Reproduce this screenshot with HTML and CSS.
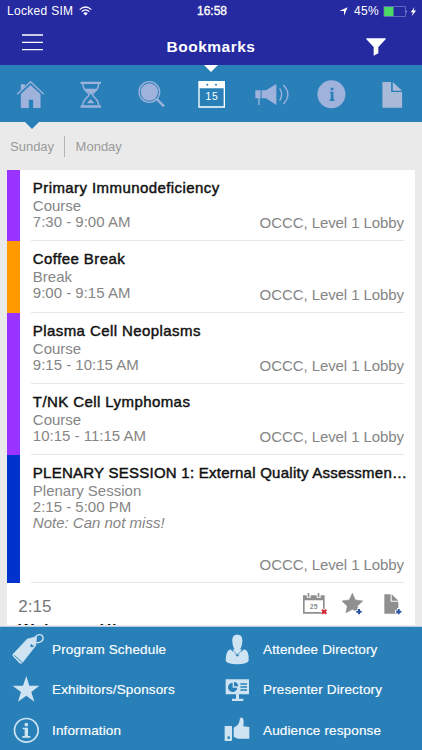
FILE: index.html
```html
<!DOCTYPE html>
<html lang="en">
<head>
    <meta charset="UTF-8">
    <meta name="viewport" content="width=device-width, initial-scale=1.0">
    <title>Bookmarks</title>
    <link rel="stylesheet" href="styles.css">
</head>
<body>
    <div class="app">
        <div class="header">
            <div class="status-bar">
                <div class="carrier">
                    <span class="carrier-name">Locked SIM</span>
                    <svg class="wifi" viewBox="0 0 39 30" fill="none" stroke="#fff" stroke-width="3.6">
                        <path d="M2 11Q19.500 -5 37 11M8 17Q19.500 6 31 17"/>
                        <path d="M12.500 21.500Q19.500 15.500 26.500 21.500L19.500 28.500Z" fill="#fff" stroke="none"/>
                    </svg>
                </div>
                <span class="clock">16:58</span>
                <div class="battery">
                    <svg class="location-arrow" viewBox="0 0 27 27"><path d="M26 1L15 26V12H1Z" fill="#fff"/></svg>
                    <span class="percent">45%</span>
                    <svg class="battery-icon" viewBox="0 0 102 34">
                        <rect x="1.500" y="2" width="66" height="30" fill="none" stroke="#8385cf" stroke-width="2"/>
                        <rect x="2" y="3" width="29" height="28" fill="#4cd964"/>
                        <path d="M71 12Q75 17 71 22Z" fill="#fff"/>
                        <path d="M96 3L84 19H91L87 32L101 14H93Z" fill="#fff"/>
                    </svg>
                </div>
            </div>
            <div class="nav-bar">
                <svg class="menu-btn" viewBox="0 0 63 51" stroke="#fff" stroke-width="4"><path d="M0 3H63M0 25H63M0 47H63"/></svg>
                <h1>Bookmarks</h1>
                <svg class="filter-btn" viewBox="0 0 60 54"><path d="M1 1H59V4L37 27V46L23 53V27L1 4Z" fill="#fff"/></svg>
            </div>
        </div>

        <div class="tab-bar">
            <div class="tab home">
                <svg viewBox="36.400 45 108 108" fill="currentColor">
                    <path d="M63 96L92 69L122 96V138H100V113H87V138H63ZM63 67H75V74L63 85Z"/>
                    <path d="M52 97L92 59L132 97" fill="none" stroke="currentColor" stroke-width="4"/>
                </svg>
            </div>
            <div class="tab">
                <svg viewBox="217.300 45 108 108" fill="currentColor">
                    <path d="M243 59H304V66H243ZM243 130H304V137H243Z"/>
                    <path d="M250 66C250 88 268 90 268 98C268 106 250 110 250 130M297 66C297 88 279 90 279 98C279 106 297 110 297 130" fill="none" stroke="currentColor" stroke-width="4.500"/>
                    <path d="M257 80H290Q286 88 279 92L274 99L268 92Q260 88 257 80ZM273 112Q280 118 284 124H263Q266 118 273 112Z"/>
                </svg>
            </div>
            <div class="tab">
                <svg viewBox="398 45 108 108" fill="currentColor">
                    <circle cx="447" cy="90" r="26"/>
                    <circle cx="447" cy="90" r="31" fill="none" stroke="currentColor" stroke-width="4"/>
                    <path d="M468 110L491 133" stroke="currentColor" stroke-width="7"/>
                </svg>
            </div>
            <div class="tab active">
                <svg viewBox="579 45 108 108">
                    <path d="M595 57H675V137H595ZM599 79V133H671V79Z" fill="#fff" fill-rule="evenodd"/>
                    <circle cx="622" cy="68" r="3" fill="#2980b9"/>
                    <circle cx="648" cy="68" r="3" fill="#2980b9"/>
                    <text class="tab-day" x="636" y="115" text-anchor="middle">15</text>
                </svg>
            </div>
            <div class="tab">
                <svg viewBox="127 45 108 108" fill="currentColor">
                    <path d="M134 85H150V109H147V129H143V109H134ZM153 85H166L197 66V129L166 109H153Z"/>
                    <path d="M207 79Q219 97 207 116M218 69Q245 97 218 126" fill="none" stroke="currentColor" stroke-width="4"/>
                </svg>
            </div>
            <div class="tab">
                <svg viewBox="307.700 45 108 108">
                    <circle cx="360" cy="97" r="42" fill="currentColor"/>
                    <path d="M358 77H366V85H358ZM356 89H366V112H369V117H355V112H358V93H356Z" fill="#2980b9"/>
                </svg>
            </div>
            <div class="tab doc">
                <svg viewBox="488.700 45 108 108" fill="currentColor">
                    <path d="M514 60H540V90H573V137H514ZM545 60L573 86H545Z"/>
                </svg>
            </div>
        </div>

        <div class="days">
            <span class="day">Sunday</span>
            <span class="day">Monday</span>
        </div>

        <div class="schedule">
            <div class="session course">
                <div class="session-body">
                    <h2>Primary Immunodeficiency</h2>
                    <div class="details">
                        <div>
                            <p>Course</p>
                            <p>7:30 - 9:00 AM</p>
                        </div>
                        <p class="location">OCCC, Level 1 Lobby</p>
                    </div>
                </div>
            </div>
            <div class="session break">
                <div class="session-body">
                    <h2>Coffee Break</h2>
                    <div class="details">
                        <div>
                            <p>Break</p>
                            <p>9:00 - 9:15 AM</p>
                        </div>
                        <p class="location">OCCC, Level 1 Lobby</p>
                    </div>
                </div>
            </div>
            <div class="session course">
                <div class="session-body">
                    <h2>Plasma Cell Neoplasms</h2>
                    <div class="details">
                        <div>
                            <p>Course</p>
                            <p>9:15 - 10:15 AM</p>
                        </div>
                        <p class="location">OCCC, Level 1 Lobby</p>
                    </div>
                </div>
            </div>
            <div class="session course">
                <div class="session-body">
                    <h2>T/NK Cell Lymphomas</h2>
                    <div class="details">
                        <div>
                            <p>Course</p>
                            <p>10:15 - 11:15 AM</p>
                        </div>
                        <p class="location">OCCC, Level 1 Lobby</p>
                    </div>
                </div>
            </div>
            <div class="session plenary">
                <div class="session-body">
                    <h2>PLENARY SESSION 1: External Quality Assessmen…</h2>
                    <div class="details">
                        <div>
                            <p>Plenary Session</p>
                            <p>2:15 - 5:00 PM</p>
                            <p class="note">Note: Can not miss!</p>
                        </div>
                        <p class="location">OCCC, Level 1 Lobby</p>
                    </div>
                </div>
            </div>
            <div class="talk">
                <div class="talk-head">
                    <span class="talk-time">2:15</span>
                    <div class="talk-actions">
                        <svg viewBox="270 420 80 80">
                            <path d="M276 436H341V491H276ZM281 451V486H336V451Z" fill="#8f8f8f" fill-rule="evenodd"/>
                            <path d="M287 426H299V443H287ZM317 426H329V443H317Z" fill="#fff"/>
                            <path d="M290 429H295V441H290ZM320 429H325V441H320Z" fill="#8f8f8f"/>
                            <text class="action-day" x="308" y="476" text-anchor="middle">25</text>
                            <path d="M333 479L346 491M346 479L333 491" stroke="#fff" stroke-width="9"/>
                            <path d="M333 479L346 491M346 479L333 491" stroke="#d2232f" stroke-width="6"/>
                        </svg>
                        <svg viewBox="388 420 80 80">
                            <path d="M425 430L434 450L456 453L440 468L444 488L425 478L406 488L410 468L394 453L416 450Z" fill="#8f8f8f" stroke="#8f8f8f" stroke-width="2" stroke-linejoin="round"/>
                            <path d="M434 485H456M445 474V496" stroke="#fff" stroke-width="10"/>
                            <path d="M437 485H453M445 477V493" stroke="#2c519f" stroke-width="6"/>
                        </svg>
                        <svg viewBox="506 420 80 80">
                            <path d="M519 433H538V455H561V491H519ZM541 433L561 452H541Z" fill="#8f8f8f"/>
                            <path d="M551 485H573M562 474V496" stroke="#fff" stroke-width="10"/>
                            <path d="M554 485H570M562 477V493" stroke="#2c519f" stroke-width="6"/>
                        </svg>
                    </div>
                </div>
                <h2 class="talk-title">Welcome Hi</h2>
            </div>
        </div>

        <div class="footer">
            <div class="link">
                <svg viewBox="30 25 104 104">
                    <path d="M39 92L82 46L110 39L107 66L68 116Q64 121 59 118L41 99Q37 96 39 92Z" fill="#cfe4f3" stroke="#cfe4f3" stroke-width="2"/>
                    <path d="M43 95L66 116" stroke="#2980b9" stroke-width="3"/>
                    <circle cx="96" cy="66" r="5" fill="#2980b9"/>
                    <path d="M97 65C108 55 102 49 106 40C111 31 127 30 129 41C132 51 119 59 109 57" fill="none" stroke="#cfe4f3" stroke-width="4"/>
                </svg>
                <span>Program Schedule</span>
            </div>
            <div class="link">
                <svg viewBox="29 32 104 104" fill="#cfe4f3">
                    <path d="M56 84Q65 88 66 94L78 106L90 94Q91 88 100 84Q114 90 112 118Q108 128 78 129Q47 128 43 118Q43 90 56 84Z"/>
                    <path d="M65 84H91V100H65Z"/>
                    <path d="M64 86L78 101L92 86" fill="none" stroke="#2980b9" stroke-width="2"/>
                    <path d="M78 40C90 40 94 48 93 61C92 76 86 87 78 92C70 87 64 76 63 61C62 48 66 40 78 40Z"/>
                </svg>
                <span>Attendee Directory</span>
            </div>
            <div class="link">
                <svg viewBox="30 152 104 104">
                    <path d="M79 164L88 193H118L94 212L103 241L79 223L54 241L63 212L38 193H69Z" fill="#cfe4f3"/>
                </svg>
                <span>Exhibitors/Sponsors</span>
            </div>
            <div class="link">
                <svg viewBox="29 155 104 104">
                    <path d="M43 177H113V222H83V235H96V242H62V235H74V222H43Z" fill="#cfe4f3"/>
                    <path d="M64 187A14 14 0 1 0 78 202H64ZM68 185V198H81A13 13 0 0 0 68 185ZM87 189H107V193H87ZM87 198H107V202H87ZM87 207H107V211H87Z" fill="#2980b9"/>
                </svg>
                <span>Presenter Directory</span>
            </div>
            <div class="link">
                <svg viewBox="30 276 104 104">
                    <circle cx="79" cy="328" r="35.500" fill="none" stroke="#cfe4f3" stroke-width="5"/>
                    <circle cx="79" cy="311" r="5.500" fill="#cfe4f3"/>
                    <path d="M68 320H84V345H91V350H67V345H74V325H68Z" fill="#cfe4f3"/>
                </svg>
                <span>Information</span>
            </div>
            <div class="link">
                <svg viewBox="29 276 104 104">
                    <path d="M40 315H62V357Q62 360 59 360H40ZM67 322Q67 318 72 317C82 312 84 306 86 292Q92 286 96 294Q98 302 96 316L114 318V353H80L67 347Z" fill="#cfe4f3"/>
                    <circle cx="52" cy="350" r="4" fill="#2980b9"/>
                </svg>
                <span>Audience response</span>
            </div>
        </div>
    </div>
</body>
</html>
```

FILE: styles.css
```css
* {
    margin: 0;
    padding: 0;
    box-sizing: border-box;
    font-family: 'Liberation Sans', Arial, sans-serif;
}

body {
    background-color: #eaeaea;
    overflow: hidden;
}

.app {
    display: flex;
    flex-direction: column;
    width: 422px;
    height: 750px;
    overflow: hidden;
}

svg {
    display: block;
    flex: none;
}

.header {
    height: 65px;
    background: #262aa0;
    color: white;
}

.status-bar {
    display: grid;
    grid-template-columns: 1fr auto 1fr;
    align-items: center;
    height: 22px;
    padding: 0 5px 0 7px;
    font-size: 12px;
}

.carrier,
.battery {
    display: flex;
    align-items: center;
}

.carrier-name {
    letter-spacing: 0.3px;
}

.wifi {
    width: 13px;
    height: 10px;
    margin-left: 6px;
}

.clock {
    -webkit-text-stroke: 0.35px white;
}

.battery {
    justify-content: flex-end;
}

.location-arrow {
    width: 9px;
    height: 9px;
    margin-right: 6px;
}

.percent {
    letter-spacing: 0.3px;
}

.battery-icon {
    width: 34px;
    height: 11px;
    margin-left: 4px;
}

.nav-bar {
    display: flex;
    align-items: center;
    justify-content: space-between;
    height: 43px;
    padding: 0 36px 0 22px;
}

.menu-btn {
    width: 21px;
    height: 17px;
    margin-bottom: 2px;
}

.filter-btn {
    width: 20px;
    height: 18px;
    margin-top: 7px;
}

.nav-bar h1 {
    font-size: 15.5px;
    margin: 6px 0 0 13px;
    letter-spacing: 0.5px;
}

.tab-bar {
    display: flex;
    align-items: center;
    height: 57px;
    padding-top: 3px;
    background: #2980b9;
    color: #9fb2dc;
}

.tab {
    position: relative;
    flex: 1;
    display: flex;
    justify-content: center;
}

.tab svg {
    width: 36px;
    height: 36px;
}

.tab.doc {
    color: #a9b9d8;
}

.tab-day {
    font-size: 31px;
    letter-spacing: 2px;
    fill: white;
}

/* notch under the home tab */
.home::after {
    content: '';
    position: absolute;
    top: 45px;
    left: 25px;
    border: 7px solid transparent;
    border-top-color: #2980b9;
    border-bottom: none;
}

/* marker above the selected tab */
.active::before {
    content: '';
    position: absolute;
    top: -12px;
    left: 23px;
    border: 7px solid transparent;
    border-top-color: white;
    border-bottom: none;
}

.days {
    display: flex;
    align-items: center;
    height: 48.33px;
    padding-left: 10px;
    color: #9b9b9b;
    font-size: 13px;
}

.day + .day {
    margin-left: 10px;
    padding-left: 10.5px;
    border-left: 1px solid #b4b4b4;
    line-height: 21px;
}

.schedule {
    height: 455.67px;
    margin: 0 7px 0 7.33px;
    background: white;
    overflow: hidden;
}

.session {
    display: flex;
    height: 71.33px;
    border-left: 13px solid #9933ff;
    padding-left: 10.5px;
}

.session.break {
    border-left-color: #ff9900;
}

.session.plenary {
    height: 127.67px;
    border-left-color: #0033cc;
}

.session-body {
    flex: 1;
    display: flex;
    flex-direction: column;
    min-width: 0;
    margin-right: 11px;
    padding: 8px 0 0 2px;
    border-bottom: 1px solid #e6e6e6;
}

h2 {
    font-size: 15px;
    font-weight: 400;
    line-height: 20px;
    letter-spacing: 0.42px;
    color: #111;
    white-space: nowrap;
    -webkit-text-stroke: 0.45px #111;
}

.plenary h2 {
    letter-spacing: 0.25px;
}

.details {
    flex: 1;
    display: flex;
    justify-content: space-between;
    font-size: 15px;
    line-height: 16px;
    color: #858585;
}

.location {
    align-self: flex-end;
    padding-bottom: 9px;
    letter-spacing: -0.08px;
}

.note {
    font-style: italic;
}

.talk {
    padding: 8px 8.5px 0 11px;
}

.talk-head {
    display: flex;
    align-items: flex-start;
    justify-content: space-between;
    height: 28.5px;
}

.talk-time {
    margin-top: 6px;
    font-size: 17px;
    color: #777;
}

.talk-actions {
    display: flex;
    gap: 13px;
    margin-top: -1px;
}

.talk-actions svg {
    width: 26.67px;
    height: 26.67px;
}

.action-day {
    font-size: 21px;
    font-weight: 700;
    fill: #8f8f8f;
}

.talk-title {
    font-size: 16.5px;
    font-weight: 700;
    letter-spacing: 0.55px;
    -webkit-text-stroke: 0;
}

.footer {
    display: grid;
    grid-template-columns: 1fr 1fr;
    grid-auto-rows: 40.5px;
    height: 124px;
    padding-top: 2px;
    border-top: 1px solid #b9cfdf;
    margin-top: 1px;
    background: #2980b9;
    color: white;
}

.link {
    display: flex;
    align-items: center;
    gap: 7.33px;
    padding-left: 10px;
    font-size: 13.5px;
    letter-spacing: 0.15px;
    -webkit-text-stroke: 0.15px white;
}

.link svg {
    width: 34.67px;
    height: 34.67px;
}
```
